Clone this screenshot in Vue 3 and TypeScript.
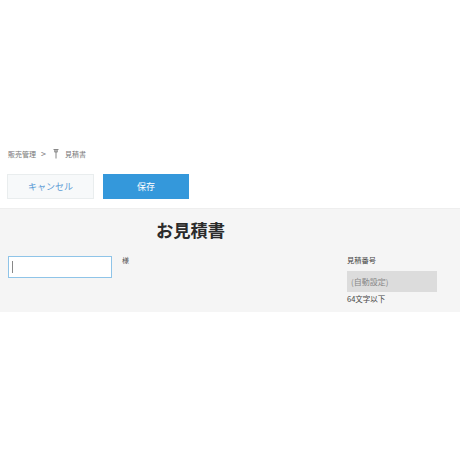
<template>
  <div class="page">
    <nav class="breadcrumb">
      <span>販売管理</span>
      <span class="sep">&gt;</span>
      <svg class="pin" width="6" height="10" viewBox="0 0 6 10">
        <path d="M.5 .5h5M1.500 3h3M3 .5V9.500M1.800 1v2M4.200 1v2" fill="none" stroke="#888" stroke-width="1" />
      </svg>
      <span>見積書</span>
    </nav>
    <div class="actions">
      <button class="btn cancel" type="button">キャンセル</button>
      <button class="btn save" type="button">保存</button>
    </div>
    <section class="sheet">
      <h1 class="title">お見積書</h1>
      <div class="fields">
        <div class="customer">
          <div class="input-box"><span class="caret"></span></div>
          <span class="honorific">様</span>
        </div>
        <div class="number">
          <div class="label">見積番号</div>
          <div class="auto">(自動設定)</div>
          <div class="hint">64文字以下</div>
        </div>
      </div>
    </section>
  </div>
</template>

<script setup lang="ts">
</script>

<style>
html,
body {
  background: #fff;
}
</style>

<style scoped>
.page {
  width: 460px;
  height: 460px;
  padding-top: 147px;
  box-sizing: border-box;
  font-family: "Noto Sans CJK JP", "Liberation Sans", sans-serif;
  color: #333;
  overflow: hidden;
}

.breadcrumb {
  display: flex;
  align-items: center;
  height: 13px;
  padding-left: 8px;
  font-size: 7px;
  color: #777;
}

.sep {
  margin: 0 7px 0 5px;
  font-size: 9px;
}

.pin {
  margin-right: 6px;
}

.actions {
  display: flex;
  gap: 9px;
  margin-top: 14px;
  padding-left: 7px;
}

.btn {
  height: 25px;
  padding: 0;
  font-family: inherit;
  font-size: 9px;
  box-sizing: border-box;
}

.cancel {
  width: 87px;
  background: #f7f9fa;
  border: 1px solid #e9edee;
  color: #5b9bd5;
}

.save {
  width: 86px;
  background: #3498db;
  border: 1px solid #3498db;
  color: #fff;
}

.sheet {
  height: 104px;
  margin-top: 9px;
  background: #f5f5f5;
  border-top: 1px solid #eee;
  box-sizing: border-box;
}

.title {
  margin: 0;
  padding: 10px 0 0 156px;
  font-size: 17.250px;
  line-height: 22px;
  font-weight: 700;
  color: #2b2b2b;
}

.fields {
  display: flex;
  margin-top: 14px;
  padding-left: 8px;
}

.customer {
  display: flex;
  width: 339px;
  align-items: flex-start;
}

.input-box {
  width: 104px;
  height: 22px;
  margin-top: 1px;
  background: #fff;
  border: 1px solid #8fc4e8;
  box-sizing: border-box;
  display: flex;
  align-items: center;
  padding-left: 3px;
}

.caret {
  width: 1px;
  height: 12px;
  background: #888;
}

.honorific {
  margin-left: 10px;
  font-size: 7px;
  line-height: 10px;
  color: #555;
}

.number {
  width: 90px;
}

.label {
  font-size: 7.250px;
  line-height: 10px;
  color: #444;
}

.auto {
  height: 21px;
  margin-top: 6px;
  padding-left: 4px;
  background: #dcdcdc;
  font-size: 8px;
  line-height: 21px;
  color: #888;
}

.hint {
  font-size: 7.500px;
  line-height: 13px;
  color: #444;
}
</style>
